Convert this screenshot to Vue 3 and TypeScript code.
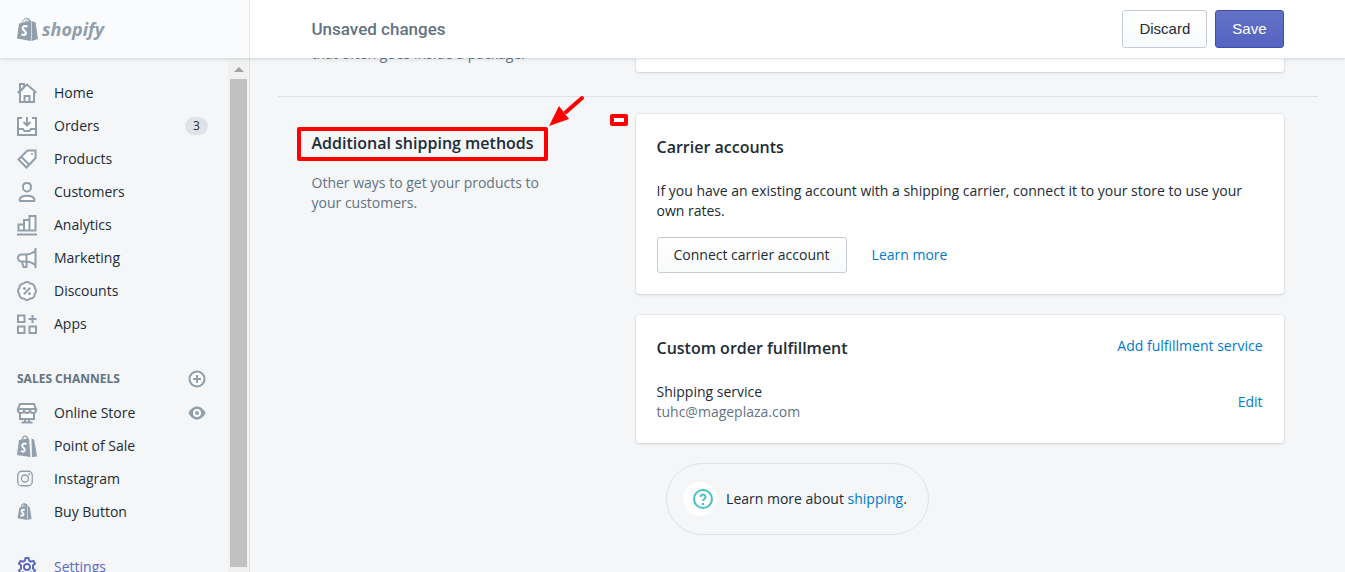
<script setup lang="ts">
interface NavItem {
  label: string
  icon: string
  badge?: number
  preview?: boolean
}

const mainNav: NavItem[] = [
  { label: 'Home', icon: 'home' },
  { label: 'Orders', icon: 'orders', badge: 3 },
  { label: 'Products', icon: 'products' },
  { label: 'Customers', icon: 'customers' },
  { label: 'Analytics', icon: 'analytics' },
  { label: 'Marketing', icon: 'marketing' },
  { label: 'Discounts', icon: 'discounts' },
  { label: 'Apps', icon: 'apps' },
]

const channels: NavItem[] = [
  { label: 'Online Store', icon: 'store', preview: true },
  { label: 'Point of Sale', icon: 'pos' },
  { label: 'Instagram', icon: 'instagram' },
  { label: 'Buy Button', icon: 'bag' },
]

const strokes: Record<string, string> = {
  home: 'M3 9V1h4v3.500L3 8.500M.7 9.800 10 1.500l9.300 8.300M3 9v10h14V9M7.500 19v-6h5v6',
  orders: 'M5 2H1v17h18V2h-4M10 1v8M6.500 6l3.500 3.500L13.500 6M1 13h5l1.500 2h5l1.500-2h5',
  products: 'M10.500 1.500H18.500V9L9.500 18.500 1.500 10.500ZM4.500 8l8 8',
  customers: 'M10 1c2.500 0 4 1.700 4 4s-1.500 4.500-4 4.500S6 7.300 6 5s1.500-4 4-4ZM3.800 19c-.9 0-1.400-.7-1.200-1.500.6-2.400 3.700-3.700 7.400-3.700s6.800 1.300 7.400 3.700c.2.800-.3 1.500-1.200 1.500Z',
  analytics: 'M0 19.500h20M1.500 15.500V9.500H7v6ZM7 15.500V5h5.500v10.500ZM12.500 15.500V1H18.500v14.500Z',
  marketing: 'M18.500 0v20M18.500 3C15 5.500 12 6.500 9 6.500H4.500a3.500 3.500 0 0 0 0 7H9c3 0 6 1 9.500 3.500M9.500 6.500v7M5 13.500l1.500 5.500H9.500v-5.500',
  discounts: 'M17.600 6.900A4.200 4.200 0 0 1 17.600 13.100 4.200 4.200 0 0 1 13.100 17.600 4.200 4.200 0 0 1 6.900 17.600 4.200 4.200 0 0 1 2.400 13.100 4.200 4.200 0 0 1 2.400 6.900 4.200 4.200 0 0 1 6.900 2.400 4.200 4.200 0 0 1 13.100 2.400 4.200 4.200 0 0 1 17.600 6.900ZM6.800 13.200l6.400-6.400',
  apps: 'M1 1.500h6.500V8H1ZM1 12.500h6.500V19H1ZM12.500 12.500H19V19h-6.500ZM15.500 1v8M11.500 5h8',
  store: 'M3 1h14l2 5H1ZM1 6v1a3 3 0 0 0 6 0 3 3 0 0 0 6 0 3 3 0 0 0 6 0V6M3 10v6h14v-6M8 16v3M12 16v3M4.500 19.500h11',
  settings: 'M8.500 1h3l.6 2.700 1.800 1 2.600-.8L18 6.500l-2 1.900v3.200l2 1.900-1.500 2.600-2.600-.8-1.800 1-.6 2.700h-3l-.6-2.700-1.800-1-2.600.8L2 13.500l2-1.900V8.400L2 6.500l1.500-2.600 2.600.8 1.800-1ZM10 7a3 3 0 1 1 0 6 3 3 0 0 1 0-6Z',
}
</script>

<template>
  <div class="app">
    <header class="topbar">
      <a class="brand" href="#" aria-label="shopify">
        <svg class="brand-bag" viewBox="0 0 21 24" aria-hidden="true">
          <path d="M5 7C5.500 3 8 .8 9.800 1.200 11.500 1.500 12 3 12 5M8 6.500c.3-3 2-5 3.800-4.600 1.200.3 1.700 1.600 1.900 3" fill="none" stroke="currentColor" />
          <path d="M2 6.500 14 3.500V24L0 21.500ZM14.600 4l4 1.500L21 22l-6.400 2Z" fill="currentColor" />
          <path d="M10.500 9.500C8.500 8.600 5.500 9 5.700 11.500c.2 2 3.400 2.300 3.200 4.600-.2 2.200-2.700 2.300-4.500 1" fill="none" stroke="#fff" stroke-width="2.200" />
        </svg>
        <span class="brand-name">shopify</span>
      </a>
      <div class="bar">
        <div class="bar-inner">
          <span class="bar-title">Unsaved changes</span>
          <button class="bar-btn" type="button">Discard</button>
          <button class="bar-btn save" type="button">Save</button>
        </div>
      </div>
    </header>

    <div class="body">
      <aside class="sidebar">
        <nav class="nav">
          <ul>
            <li v-for="item in mainNav" :key="item.label">
              <a href="#">
                <svg class="icon" viewBox="0 0 20 20" aria-hidden="true">
                  <path :d="strokes[item.icon]" fill="#fff" />
                  <circle v-if="item.icon === 'products'" cx="15" cy="5" r="1" class="solid" />
                  <template v-if="item.icon === 'discounts'">
                    <circle cx="7.500" cy="7.500" r="1.500" class="solid" />
                    <circle cx="12.500" cy="12.500" r="1.500" class="solid" />
                  </template>
                </svg>
                <span>{{ item.label }}</span>
              </a>
              <span v-if="item.badge" class="badge">{{ item.badge }}</span>
            </li>
          </ul>
          <div class="nav-head">
            <h2>SALES CHANNELS</h2>
            <button type="button" class="icon-btn" aria-label="Add sales channel">
              <svg viewBox="0 0 18 18" aria-hidden="true">
                <circle cx="9" cy="9" r="7.500" fill="#fff" stroke="currentColor" stroke-width="2" />
                <path d="M9 5v8M5 9h8" stroke="currentColor" stroke-width="2" />
              </svg>
            </button>
          </div>
          <ul>
            <li v-for="item in channels" :key="item.label">
              <a href="#">
                <svg v-if="item.icon === 'store'" class="icon" viewBox="0 0 20 20" aria-hidden="true">
                  <path :d="strokes.store" fill="#fff" />
                </svg>
                <svg v-else-if="item.icon === 'pos'" class="icon tall" viewBox="0 0 20 22" aria-hidden="true">
                  <path d="M5 6c.5-3 2-5 3.500-4.800C10 1.400 10.500 3 10.500 5" class="thin" />
                  <path d="M2 5 12 3.500 13.500 22 0 20ZM14.500 3.500l2.700 1.200L20 21.500 15 22Z" class="solid" />
                  <path d="M9.500 9C7 8 5 9 5.200 11c.2 1.800 2.800 2 2.600 4-.2 2-2.300 2-4 1" class="letter" />
                </svg>
                <svg v-else-if="item.icon === 'instagram'" class="icon small" viewBox="0 0 16 16" aria-hidden="true">
                  <rect x=".75" y=".75" width="14.500" height="14.500" rx="4" class="thin" />
                  <circle cx="8" cy="8" r="3.500" class="thin" />
                  <circle cx="12.200" cy="3.800" r="1" class="solid" />
                </svg>
                <svg v-else class="icon small" viewBox="0 0 16 18" aria-hidden="true">
                  <path d="M4 5c.4-2.500 2-4.200 3.300-4C8.600 1.200 9 2.500 9 4M6.500 4.500C7 2 8.300 1.200 9.300 1.700c.6.400 1 1.300 1 2" class="thin" />
                  <path d="M2 5 10.300 3v15L0 16.200ZM10.900 3.200 13 4.300 15 16.600 10.900 18Z" class="solid" />
                  <path d="M7.700 7.500C6 6.800 4.200 7.300 4.400 8.900c.2 1.400 2.200 1.700 2.100 3.200-.2 1.500-1.900 1.500-3.200.7" class="letter" />
                </svg>
                <span>{{ item.label }}</span>
              </a>
              <button v-if="item.preview" type="button" class="icon-btn" aria-label="View online store">
                <svg viewBox="0 0 18 18" aria-hidden="true">
                  <path d="M.5 9C2.500 5 5.500 2.500 9 2.500s6.500 2.500 8.500 6.500c-2 4-5 6.500-8.500 6.500S2.500 13 .5 9Z" fill="currentColor" />
                  <circle cx="9" cy="9" r="3" fill="currentColor" stroke="#fff" stroke-width="2" />
                </svg>
              </button>
            </li>
          </ul>
          <a class="settings" href="#">
            <svg class="icon" viewBox="0 0 20 20" aria-hidden="true">
              <path :d="strokes.settings" fill="#fff" />
            </svg>
            <span>Settings</span>
          </a>
        </nav>
        <div class="scrollbar" aria-hidden="true">
          <span class="scroll-up"></span>
          <span class="scroll-thumb"></span>
        </div>
      </aside>

      <main class="main">
        <div class="page">
          <section class="section previous">
            <p class="muted intro">that often goes inside a package.</p>
            <div class="card card-end"></div>
          </section>

          <section class="section current">
            <div class="intro">
              <h2 class="title marked">
                Additional shipping methods
                <svg class="arrow" viewBox="0 0 38 32" aria-hidden="true">
                  <path d="M33 3 17 17" stroke="#f00" stroke-width="4" stroke-linecap="round" />
                  <path d="M0 31 10 11 20 24Z" fill="#f00" />
                </svg>
              </h2>
              <p class="muted">Other ways to get your products to your customers.</p>
            </div>
            <div class="cards">
              <span class="marker" aria-hidden="true"></span>
              <article class="card">
                <h3 class="title">Carrier accounts</h3>
                <p class="copy">If you have an existing account with a shipping carrier, connect it to your store to use your own rates.</p>
                <div class="actions">
                  <button class="btn" type="button">Connect carrier account</button>
                  <a href="#">Learn more</a>
                </div>
              </article>
              <article class="card">
                <div class="split">
                  <h3 class="title">Custom order fulfillment</h3>
                  <a href="#">Add fulfillment service</a>
                </div>
                <div class="split service">
                  <p>Shipping service<br><span class="muted">tuhc@mageplaza.com</span></p>
                  <a href="#">Edit</a>
                </div>
              </article>
            </div>
          </section>

          <div class="help">
            <span class="help-icon">
              <svg viewBox="0 0 20 20" aria-hidden="true">
                <circle cx="10" cy="10" r="9" />
                <path d="M7.500 8a2.500 2.500 0 1 1 3.800 2.100c-.9.500-1.300.8-1.300 1.900M10 14v2" />
              </svg>
            </span>
            <p>Learn more about <a href="#">shipping</a>.</p>
          </div>
        </div>
      </main>
    </div>
  </div>
</template>

<style>
body {
  margin: 0;
}
</style>

<style scoped>
.app {
  display: flex;
  flex-direction: column;
  height: 100vh;
  overflow: hidden;
  background: #f4f6f8;
  color: #212b36;
  font: 14px/20px "Open Sans", "Noto Sans", sans-serif;
}

.app * {
  box-sizing: border-box;
}

h2, h3, p, ul {
  margin: 0;
  padding: 0;
}

ul {
  list-style: none;
}

a {
  color: #007ace;
  text-decoration: none;
}

button {
  font: inherit;
  cursor: pointer;
}

.topbar {
  position: relative;
  z-index: 1;
  display: flex;
  flex: none;
  height: 58px;
  background: #fff;
  box-shadow: 0 0 4px rgba(33, 43, 54, 0.25);
}

.brand {
  display: flex;
  flex: none;
  align-items: center;
  gap: 4px;
  width: 250px;
  padding: 0 17px;
  border-right: 1px solid #e3e7eb;
  background: #fafbfd;
  color: #919eab;
}

.brand-bag {
  width: 21px;
  height: 24px;
}

.brand-name {
  font-size: 18px;
  font-style: italic;
  font-weight: 700;
}

.bar {
  flex: 1;
}

.bar-inner {
  display: flex;
  align-items: center;
  gap: 8px;
  max-width: 1040px;
  height: 100%;
  margin: 0 auto;
  padding: 0 34px;
}

.bar-title {
  flex: 1;
  color: #637381;
  font-family: Roboto, "Liberation Sans", sans-serif;
  font-size: 17px;
  font-weight: 500;
}

.bar-btn {
  height: 38px;
  padding: 0 16px;
  border: 1px solid #c4cdd5;
  border-radius: 3px;
  background: linear-gradient(#fff, #f9fafb);
  color: #212b36;
  font-family: "Liberation Sans", Arial, sans-serif;
  font-size: 15px;
}

.save {
  border-color: #3f4eae;
  background: linear-gradient(#6371c7, #5563c1);
  color: #fff;
}

.body {
  display: flex;
  flex: 1;
  min-height: 0;
}

.sidebar {
  display: flex;
  flex: none;
  width: 250px;
  border-right: 1px solid #dfe3e8;
}

.nav {
  flex: 1;
  min-width: 0;
  padding: 18px 20px 0 17px;
  overflow: hidden;
}

.nav li {
  display: flex;
  align-items: center;
  justify-content: space-between;
  height: 33px;
}

.nav a {
  display: flex;
  align-items: center;
  gap: 17px;
  color: #212b36;
}

.icon {
  flex: none;
  width: 20px;
  height: 20px;
  overflow: visible;
  color: #919eab;
  stroke: currentColor;
  stroke-width: 2;
}

.icon.tall {
  height: 22px;
}

.icon.small {
  width: 16px;
  height: 17px;
  margin-right: 4px;
}

.icon .solid {
  fill: currentColor;
  stroke: none;
}

.icon .thin {
  fill: none;
  stroke-width: 1.3;
}

.icon .letter {
  fill: none;
  stroke: #fff;
  stroke-width: 2;
}

.badge {
  width: 23px;
  border-radius: 9px;
  background: #dfe3e8;
  font-size: 12px;
  line-height: 18px;
  text-align: center;
}

.nav-head {
  display: flex;
  align-items: center;
  justify-content: space-between;
  height: 20px;
  margin: 29px 0 7px;
}

.nav-head h2 {
  color: #637381;
  font-size: 12px;
  font-weight: 700;
}

.icon-btn {
  display: flex;
  margin-right: 2px;
  padding: 0;
  border: 0;
  background: none;
  color: #919eab;
}

.icon-btn svg {
  width: 18px;
  height: 18px;
}

.nav .settings {
  height: 33px;
  margin-top: 22px;
  color: #5c6ac4;
}

.settings .icon {
  color: inherit;
}

.scrollbar {
  display: flex;
  flex: none;
  flex-direction: column;
  align-items: center;
  width: 21px;
  padding-bottom: 5px;
  background: #f1f1f1;
}

.scroll-up {
  margin: 9px 0 7px;
  border: 5px solid transparent;
  border-top: 0;
  border-bottom-color: #a3a3a3;
}

.scroll-thumb {
  flex: 1;
  width: 17px;
  background: #c1c1c1;
}

.main {
  flex: 1;
  min-width: 0;
  overflow: hidden;
}

.page {
  max-width: 1040px;
  margin: 0 auto;
}

.section {
  display: grid;
  grid-template-columns: 1fr 2fr;
  padding: 0 34px;
}

.previous {
  grid-template-rows: 14px;
  align-items: end;
  padding-bottom: 24px;
  border-bottom: 1px solid #dfe3e8;
}

.previous .intro {
  margin-bottom: 8px;
}

.current {
  padding-top: 17px;
}

.current .intro {
  padding: 16px 80px 0 0;
}

.muted {
  color: #637381;
}

.title {
  font-size: 16px;
  font-weight: 600;
  line-height: 24px;
}

.marked {
  position: relative;
  width: max-content;
  margin: 1px 0 18px;
}

.marked::before {
  position: absolute;
  inset: -4px -14px -6px -15px;
  border: 4px solid #f00;
  border-radius: 2px;
  content: "";
}

.arrow {
  position: absolute;
  bottom: 28px;
  left: calc(100% + 15px);
  width: 38px;
  height: 32px;
}

.cards {
  position: relative;
  display: grid;
  gap: 21px;
}

.marker {
  position: absolute;
  right: calc(100% + 8px);
  width: 18px;
  height: 12px;
  border: 4px solid #f00;
  border-radius: 2px;
  background: #fff;
}

.card {
  padding: 21px;
  border-radius: 3px;
  background: #fff;
  box-shadow: 0 0 0 1px rgba(63, 63, 68, 0.05), 0 1px 3px rgba(63, 63, 68, 0.15);
}

.card-end {
  height: 44px;
}

.copy {
  margin: 22px 0 16px;
}

.actions {
  display: flex;
  align-items: center;
  gap: 25px;
}

.btn {
  height: 36px;
  padding: 0 16px;
  border: 1px solid #c4cdd5;
  border-radius: 3px;
  background: linear-gradient(#fff, #f9fafb);
  color: #212b36;
}

.split {
  display: flex;
  justify-content: space-between;
}

.service {
  align-items: center;
  margin-top: 22px;
}

.help {
  display: flex;
  align-items: center;
  gap: 9px;
  width: max-content;
  height: 72px;
  margin: 20px auto;
  padding: 0 21px 0 16px;
  border: 1px solid #dfe3e8;
  border-radius: 36px;
}

.help-icon {
  display: flex;
  align-items: center;
  justify-content: flex-end;
  width: 34px;
  height: 34px;
  padding-right: 4px;
  border-radius: 50%;
  background: #fff;
}

.help-icon svg {
  width: 20px;
  height: 20px;
  fill: none;
  stroke: #47c1bf;
  stroke-width: 2;
}
</style>
